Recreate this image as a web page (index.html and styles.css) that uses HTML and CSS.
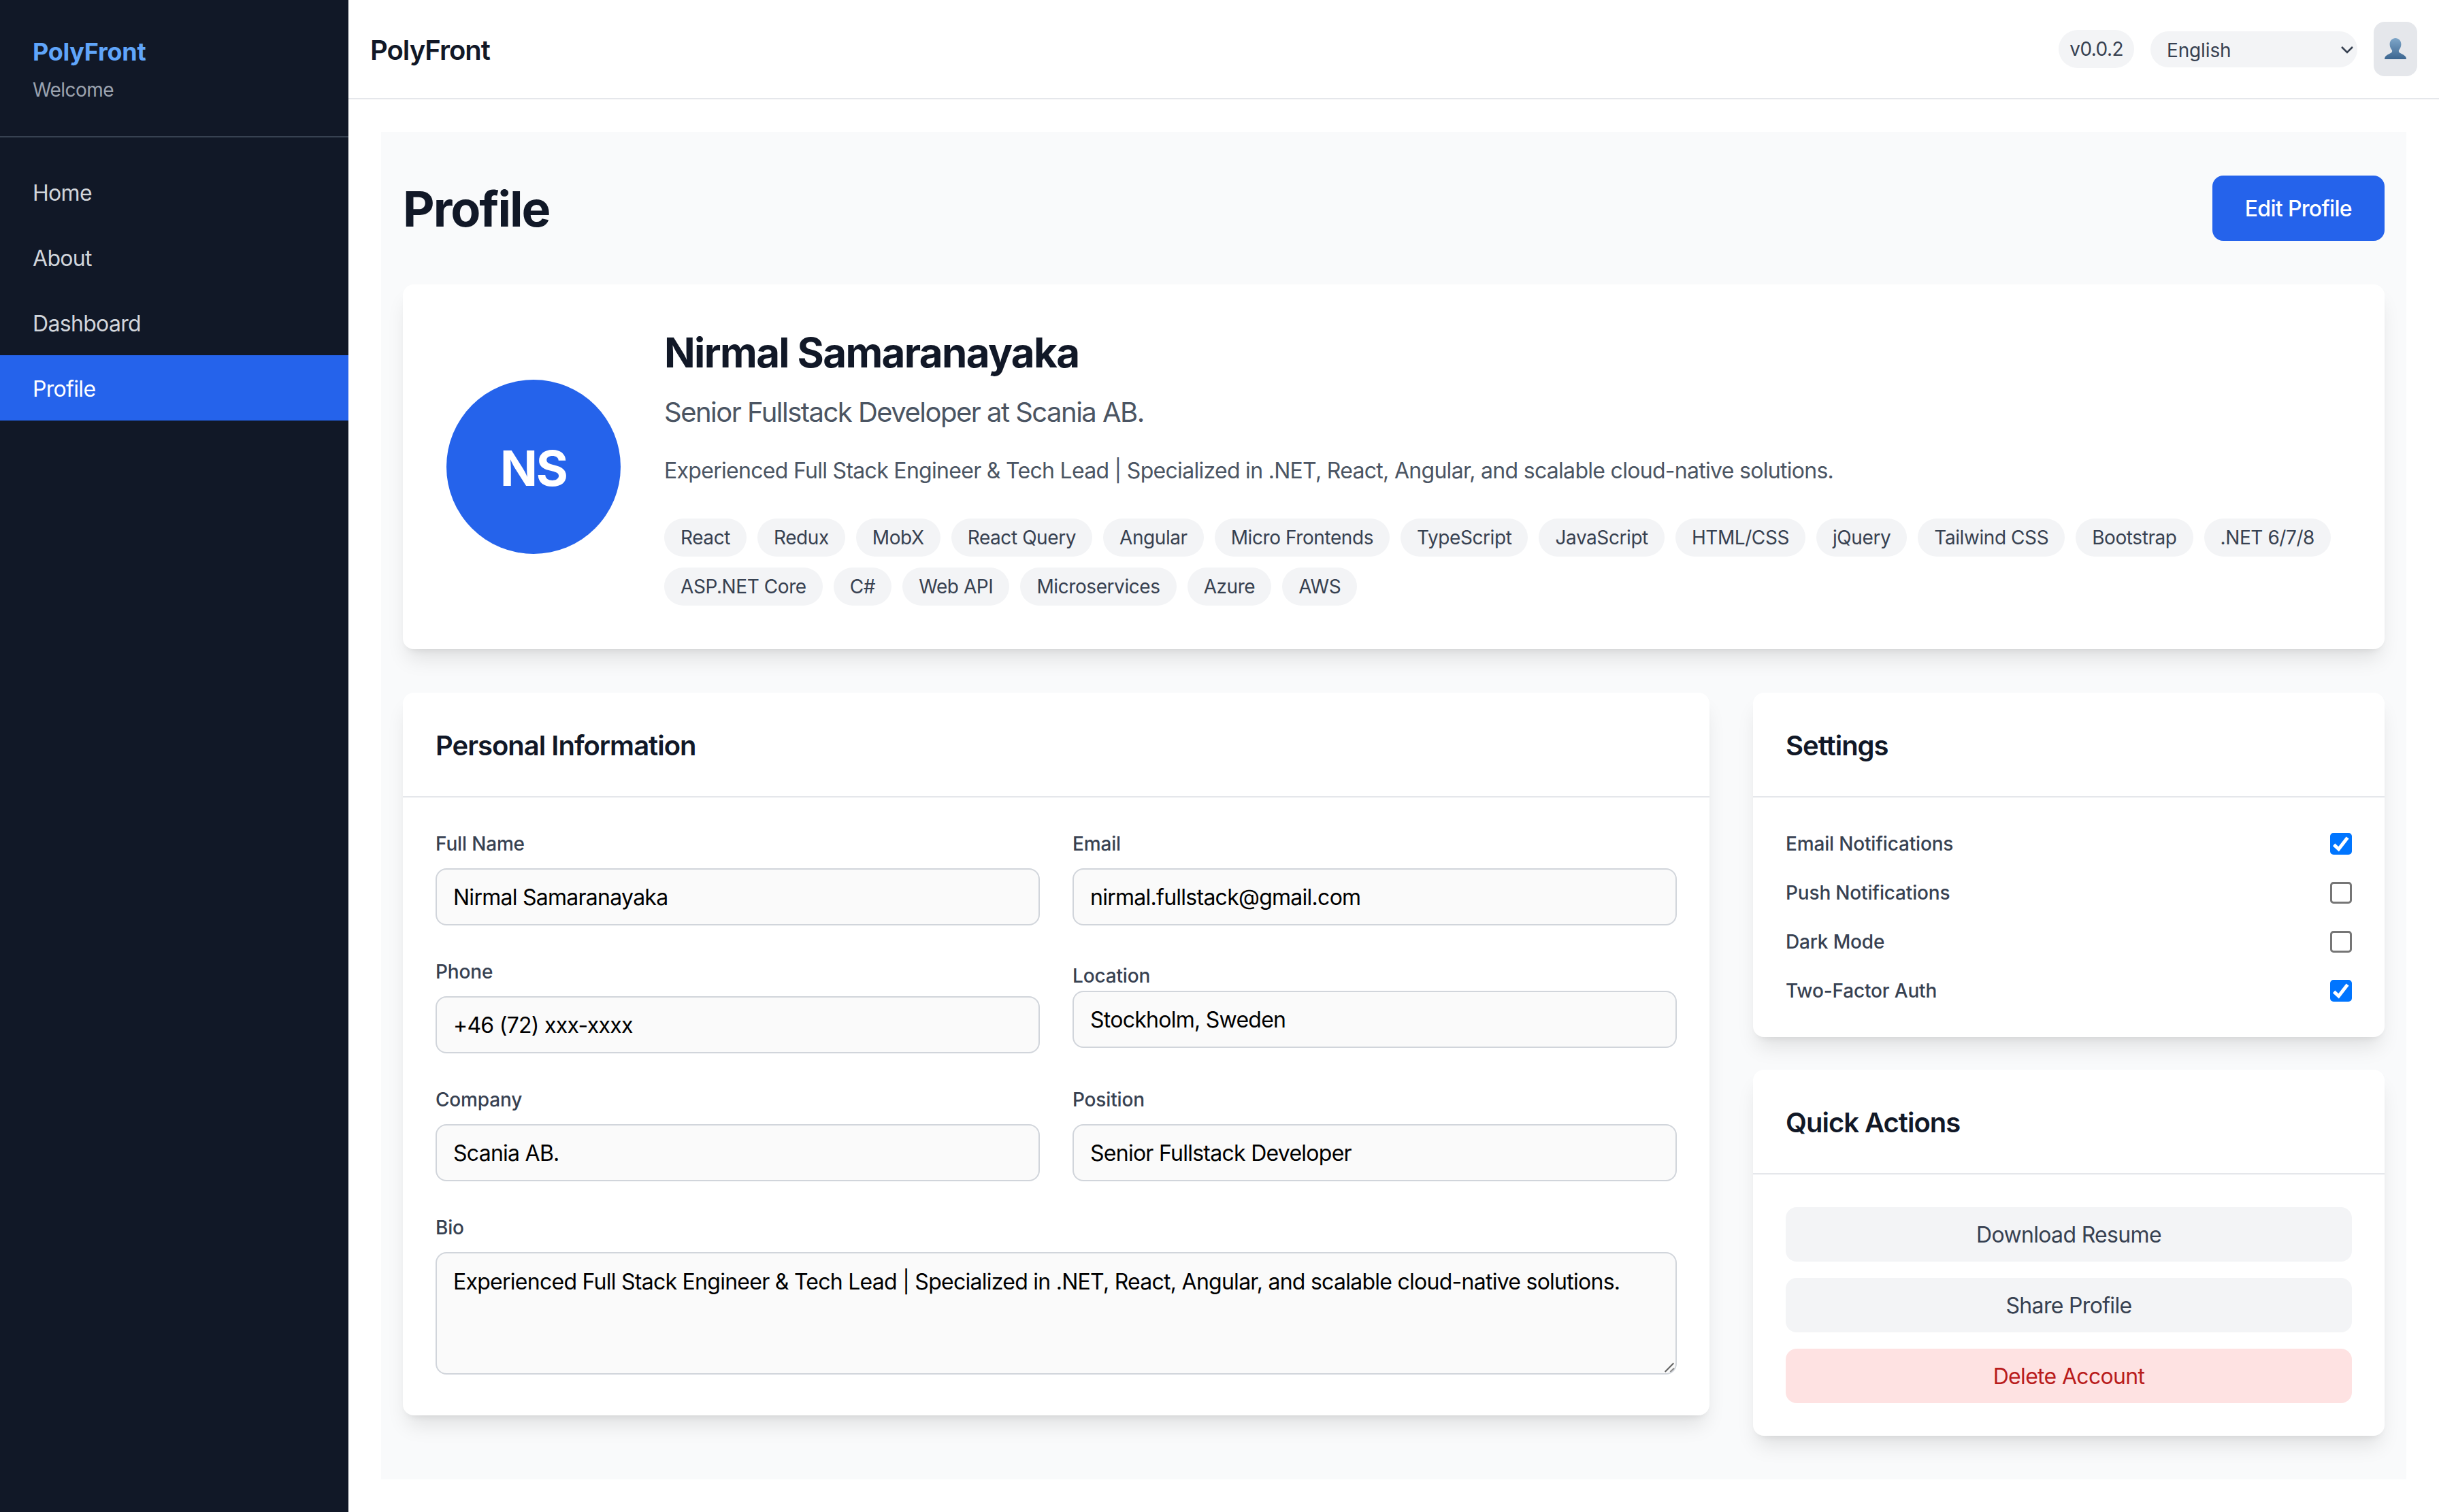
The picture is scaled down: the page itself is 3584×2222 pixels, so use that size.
FILE: index.html
```html
<!DOCTYPE html>
<html lang="en">

<head>
    <meta charset="utf-8">
    <title>PolyFront</title>
    <link rel="stylesheet" href="styles.css">
</head>

<body>
    <div class="app">
        <aside class="sidebar">
            <div class="brand">
                <div class="brand-name">PolyFront</div>
                <div class="brand-sub">Welcome</div>
            </div>
            <nav class="nav">
                <a class="nav-item">Home</a>
                <a class="nav-item">About</a>
                <a class="nav-item">Dashboard</a>
                <a class="nav-item active">Profile</a>
            </nav>
        </aside>

        <div class="main">
            <header class="topbar">
                <div class="topbar-title">PolyFront</div>
                <div class="topbar-right">
                    <span class="version">v0.0.2</span>
                    <div class="lang">
                        <select class="lang-select">
                            <option>English</option>
                        </select>
                        <svg class="lang-arrow" width="20" height="12" viewBox="0 0 20 12">
                            <path d="M2 2l8 8 8-8" fill="none" stroke="#374151" stroke-width="2.6" />
                        </svg>
                    </div>
                    <button class="avatar-btn">
                        <svg width="32" height="32" viewBox="0 0 32 32">
                            <defs>
                                <linearGradient id="userGrad" x1="0" y1="0" x2="0" y2="1">
                                    <stop offset="0" stop-color="#7ea6c9" />
                                    <stop offset="1" stop-color="#3c6690" />
                                </linearGradient>
                            </defs>
                            <path fill="url(#userGrad)" d="M16 0C11.5 0 7.6 3.5 7.6 9c0 3.6 1.4 6.5 3.2 8.5.6.8.5 3-.8 3.9C7.5 23 1.5 25 .5 28.5.3 29.5 0 31 0 31h32s-.3-1.5-.5-2.5C30.5 25 24.5 23 22 21.4c-1.3-.9-1.4-3.1-.8-3.9 1.8-2 3.2-4.9 3.2-8.5C24.4 3.5 20.5 0 16 0z" />
                        </svg>
                    </button>
                </div>
            </header>

            <main class="content">
                <div class="page">
                    <div class="page-head">
                        <h1>Profile</h1>
                        <button class="btn-primary">Edit Profile</button>
                    </div>

                    <section class="card hero">
                        <div class="hero-avatar">NS</div>
                        <div class="hero-info">
                            <h2>Nirmal Samaranayaka</h2>
                            <p class="hero-role">Senior Fullstack Developer at Scania AB.</p>
                            <p class="hero-bio">Experienced Full Stack Engineer &amp; Tech Lead | Specialized in .NET, React, Angular, and scalable cloud-native solutions.</p>
                            <div class="tags">
                                <span class="tag">React</span>
                                <span class="tag">Redux</span>
                                <span class="tag">MobX</span>
                                <span class="tag">React Query</span>
                                <span class="tag">Angular</span>
                                <span class="tag">Micro Frontends</span>
                                <span class="tag">TypeScript</span>
                                <span class="tag">JavaScript</span>
                                <span class="tag">HTML/CSS</span>
                                <span class="tag">jQuery</span>
                                <span class="tag">Tailwind CSS</span>
                                <span class="tag">Bootstrap</span>
                                <span class="tag">.NET 6/7/8</span>
                                <span class="tag">ASP.NET Core</span>
                                <span class="tag">C#</span>
                                <span class="tag">Web API</span>
                                <span class="tag">Microservices</span>
                                <span class="tag">Azure</span>
                                <span class="tag">AWS</span>
                            </div>
                        </div>
                    </section>

                    <div class="columns">
                        <section class="card info-card">
                            <h3 class="card-head">Personal Information</h3>
                            <div class="form">
                                <div class="field">
                                    <label>Full Name</label>
                                    <input class="control" type="text" value="Nirmal Samaranayaka">
                                </div>
                                <div class="field">
                                    <label>Email</label>
                                    <input class="control" type="text" value="nirmal.fullstack@gmail.com">
                                </div>
                                <div class="field">
                                    <label>Phone</label>
                                    <input class="control" type="text" value="+46 (72) xxx-xxxx">
                                </div>
                                <div class="field field-location">
                                    <label>Location</label>
                                    <input class="control" type="text" value="Stockholm, Sweden">
                                </div>
                                <div class="field">
                                    <label>Company</label>
                                    <input class="control" type="text" value="Scania AB.">
                                </div>
                                <div class="field">
                                    <label>Position</label>
                                    <input class="control" type="text" value="Senior Fullstack Developer">
                                </div>
                                <div class="field field-wide">
                                    <label>Bio</label>
                                    <div class="bio-wrap">
                                        <textarea class="control bio" rows="3">Experienced Full Stack Engineer &amp; Tech Lead | Specialized in .NET, React, Angular, and scalable cloud-native solutions.</textarea>
                                        <svg class="bio-grip" width="20" height="20" viewBox="0 0 20 20">
                                            <path d="M2.7 16L15.3 3.3" stroke="#5f5f5f" stroke-width="2" />
                                            <path d="M10.3 16L16 10.7" stroke="#8a8a8a" stroke-width="2" />
                                        </svg>
                                    </div>
                                </div>
                            </div>
                        </section>

                        <div class="side">
                            <section class="card">
                                <h3 class="card-head">Settings</h3>
                                <div class="settings">
                                    <div class="setting">
                                        <span>Email Notifications</span>
                                        <span class="check on">
                                            <svg width="32" height="32" viewBox="0 0 32 32"><path d="M5.6 17.4l7 6.4L25.6 7" fill="none" stroke="#fff" stroke-width="5" /></svg>
                                        </span>
                                    </div>
                                    <div class="setting">
                                        <span>Push Notifications</span>
                                        <span class="check"></span>
                                    </div>
                                    <div class="setting">
                                        <span>Dark Mode</span>
                                        <span class="check"></span>
                                    </div>
                                    <div class="setting">
                                        <span>Two-Factor Auth</span>
                                        <span class="check on">
                                            <svg width="32" height="32" viewBox="0 0 32 32"><path d="M5.6 17.4l7 6.4L25.6 7" fill="none" stroke="#fff" stroke-width="5" /></svg>
                                        </span>
                                    </div>
                                </div>
                            </section>

                            <section class="card">
                                <h3 class="card-head">Quick Actions</h3>
                                <div class="actions">
                                    <button class="btn-action">Download Resume</button>
                                    <button class="btn-action">Share Profile</button>
                                    <button class="btn-action danger">Delete Account</button>
                                </div>
                            </section>
                        </div>
                    </div>
                </div>
            </main>
        </div>
    </div>
</body>

</html>
```

FILE: styles.css
```css
* {
    box-sizing: border-box;
}

body {
    margin: 0;
    background: #fff;
    font-family: Inter, "Liberation Sans", sans-serif;
    font-size: 32px;
    line-height: 48px;
    letter-spacing: -0.021em;
    color: #111827;
}

h1,
h2,
h3,
p {
    margin: 0;
}

button,
input,
select,
textarea {
    font-family: inherit;
    letter-spacing: inherit;
}

button {
    border: 0;
    cursor: pointer;
}

.app {
    display: flex;
    min-height: 2222px;
}

/* sidebar */
.sidebar {
    width: 512px;
    flex: none;
    background: #111827;
}

.brand {
    height: 202px;
    padding: 48px;
    border-bottom: 2px solid #374151;
}

.brand-name {
    font-size: 36px;
    line-height: 56px;
    font-weight: 700;
    letter-spacing: -0.008em;
    color: #60a5fa;
}

.brand-sub {
    margin-top: 8px;
    font-size: 28px;
    line-height: 40px;
    letter-spacing: -0.02em;
    color: #9ca3af;
}

.nav {
    padding-top: 32px;
}

.nav-item {
    display: block;
    padding: 26px 48px 22px;
    color: #d1d5db;
}

.nav-item.active {
    background: #2563eb;
    color: #fff;
}

/* top bar */
.main {
    flex: 1;
    min-width: 0;
}

.topbar {
    display: flex;
    align-items: center;
    justify-content: space-between;
    padding: 32px;
    border-bottom: 2px solid #e5e7eb;
}

.topbar-title {
    padding-top: 4px;
    font-size: 40px;
    line-height: 56px;
    font-weight: 600;
    letter-spacing: -0.025em;
}

.topbar-right {
    display: flex;
    align-items: center;
    gap: 24px;
}

.version {
    padding: 8px 16px;
    border-radius: 9999px;
    background: #f3f4f6;
    font-size: 28px;
    line-height: 40px;
    letter-spacing: -0.02em;
    color: #374151;
}

.lang {
    position: relative;
    height: 53px;
}

.lang-select {
    display: block;
    width: 304px;
    height: 53px;
    padding: 3px 24px 0;
    border: 0;
    border-radius: 9999px;
    background: #f3f4f6;
    font-size: 28px;
    letter-spacing: -0.005em;
    color: #374151;
    appearance: none;
}

.lang-arrow {
    position: absolute;
    top: 21px;
    right: 5px;
}

.avatar-btn {
    display: flex;
    align-items: center;
    justify-content: center;
    width: 64px;
    height: 80px;
    padding: 0;
    border-radius: 16px;
    background: #e5e7eb;
}

/* page */
.content {
    padding: 48px;
}

.page {
    padding: 64px 32px;
    background: #f9fafb;
}

.page-head {
    display: flex;
    align-items: center;
    justify-content: space-between;
    margin-bottom: 64px;
}

h1 {
    padding-top: 2px;
    font-size: 72px;
    line-height: 78px;
    font-weight: 700;
    letter-spacing: -0.028em;
}

.btn-primary {
    height: 96px;
    padding: 0 48px;
    border-radius: 16px;
    background: #2563eb;
    font-size: 32px;
    font-weight: 500;
    color: #fff;
}

.card {
    border-radius: 16px;
    background: #fff;
    box-shadow: 0 20px 30px -6px rgba(0, 0, 0, .1), 0 8px 12px -8px rgba(0, 0, 0, .1);
}

/* profile card */
.hero {
    display: flex;
    align-items: center;
    gap: 64px;
    padding: 64px;
    margin-bottom: 64px;
}

.hero-avatar {
    display: flex;
    align-items: center;
    justify-content: center;
    width: 256px;
    height: 256px;
    flex: none;
    padding-top: 4px;
    border-radius: 50%;
    background: #2563eb;
    font-size: 72px;
    font-weight: 700;
    letter-spacing: -0.027em;
    color: #fff;
}

.hero-info {
    flex: 1;
    min-width: 0;
}

h2 {
    font-size: 60px;
    line-height: 72px;
    font-weight: 700;
    letter-spacing: -0.027em;
}

.hero-role {
    margin-top: 24px;
    font-size: 40px;
    line-height: 56px;
    letter-spacing: -0.038em;
    color: #4b5563;
}

.hero-bio {
    margin-top: 34px;
    letter-spacing: -0.022em;
    color: #4b5563;
}

.tags {
    display: flex;
    flex-wrap: wrap;
    gap: 16px;
    margin-top: 46px;
}

.tag {
    padding: 8px 24px;
    border-radius: 9999px;
    background: #f3f4f6;
    font-size: 28px;
    line-height: 40px;
    letter-spacing: -0.015em;
    color: #374151;
}

/* lower columns */
.columns {
    display: grid;
    grid-template-columns: repeat(3, 1fr);
    align-items: start;
    gap: 64px;
}

.info-card {
    grid-column: span 2;
}

.side {
    display: flex;
    flex-direction: column;
    gap: 48px;
}

.card-head {
    padding: 50px 48px 46px;
    border-bottom: 2px solid #e5e7eb;
    font-size: 40px;
    line-height: 56px;
    font-weight: 600;
    letter-spacing: -0.025em;
}

.form {
    display: grid;
    grid-template-columns: 1fr 1fr;
    gap: 48px;
    padding: 48px;
}

.field label {
    display: block;
    margin-bottom: 16px;
    font-size: 28px;
    line-height: 40px;
    font-weight: 500;
    letter-spacing: -0.006em;
    color: #374151;
}

.field-location {
    padding-top: 6px;
}

.field-location label {
    margin-bottom: 2px;
}

.field-wide {
    grid-column: span 2;
}

.control {
    display: block;
    width: 100%;
    height: 84px;
    padding: 16px 24px;
    border: 2px solid #d1d5db;
    border-radius: 16px;
    background: #fafafa;
    font-size: 32px;
    line-height: 48px;
    letter-spacing: -0.023em;
    color: #000;
}

.bio-wrap {
    position: relative;
    height: 192px;
}

.bio {
    height: 180px;
    padding: 18px 24px 14px;
    resize: none;
}

.bio-grip {
    position: absolute;
    right: 0;
    top: 160px;
}

.settings {
    display: flex;
    flex-direction: column;
    gap: 32px;
    padding: 48px;
}

.setting {
    display: flex;
    align-items: center;
    justify-content: space-between;
    font-size: 28px;
    line-height: 40px;
    font-weight: 500;
    letter-spacing: -0.006em;
    color: #374151;
}

.check {
    display: block;
    width: 32px;
    height: 32px;
    border: 3px solid #767676;
    border-radius: 5px;
    background: #fff;
}

.check.on {
    border: 0;
    background: #0075ff;
}

.check svg {
    display: block;
}

.actions {
    display: flex;
    flex-direction: column;
    gap: 24px;
    padding: 48px;
}

.btn-action {
    height: 80px;
    padding: 0;
    border-radius: 16px;
    background: #f3f4f6;
    font-size: 32px;
    color: #374151;
}

.btn-action.danger {
    background: #fee2e2;
    color: #b91c1c;
}
```
